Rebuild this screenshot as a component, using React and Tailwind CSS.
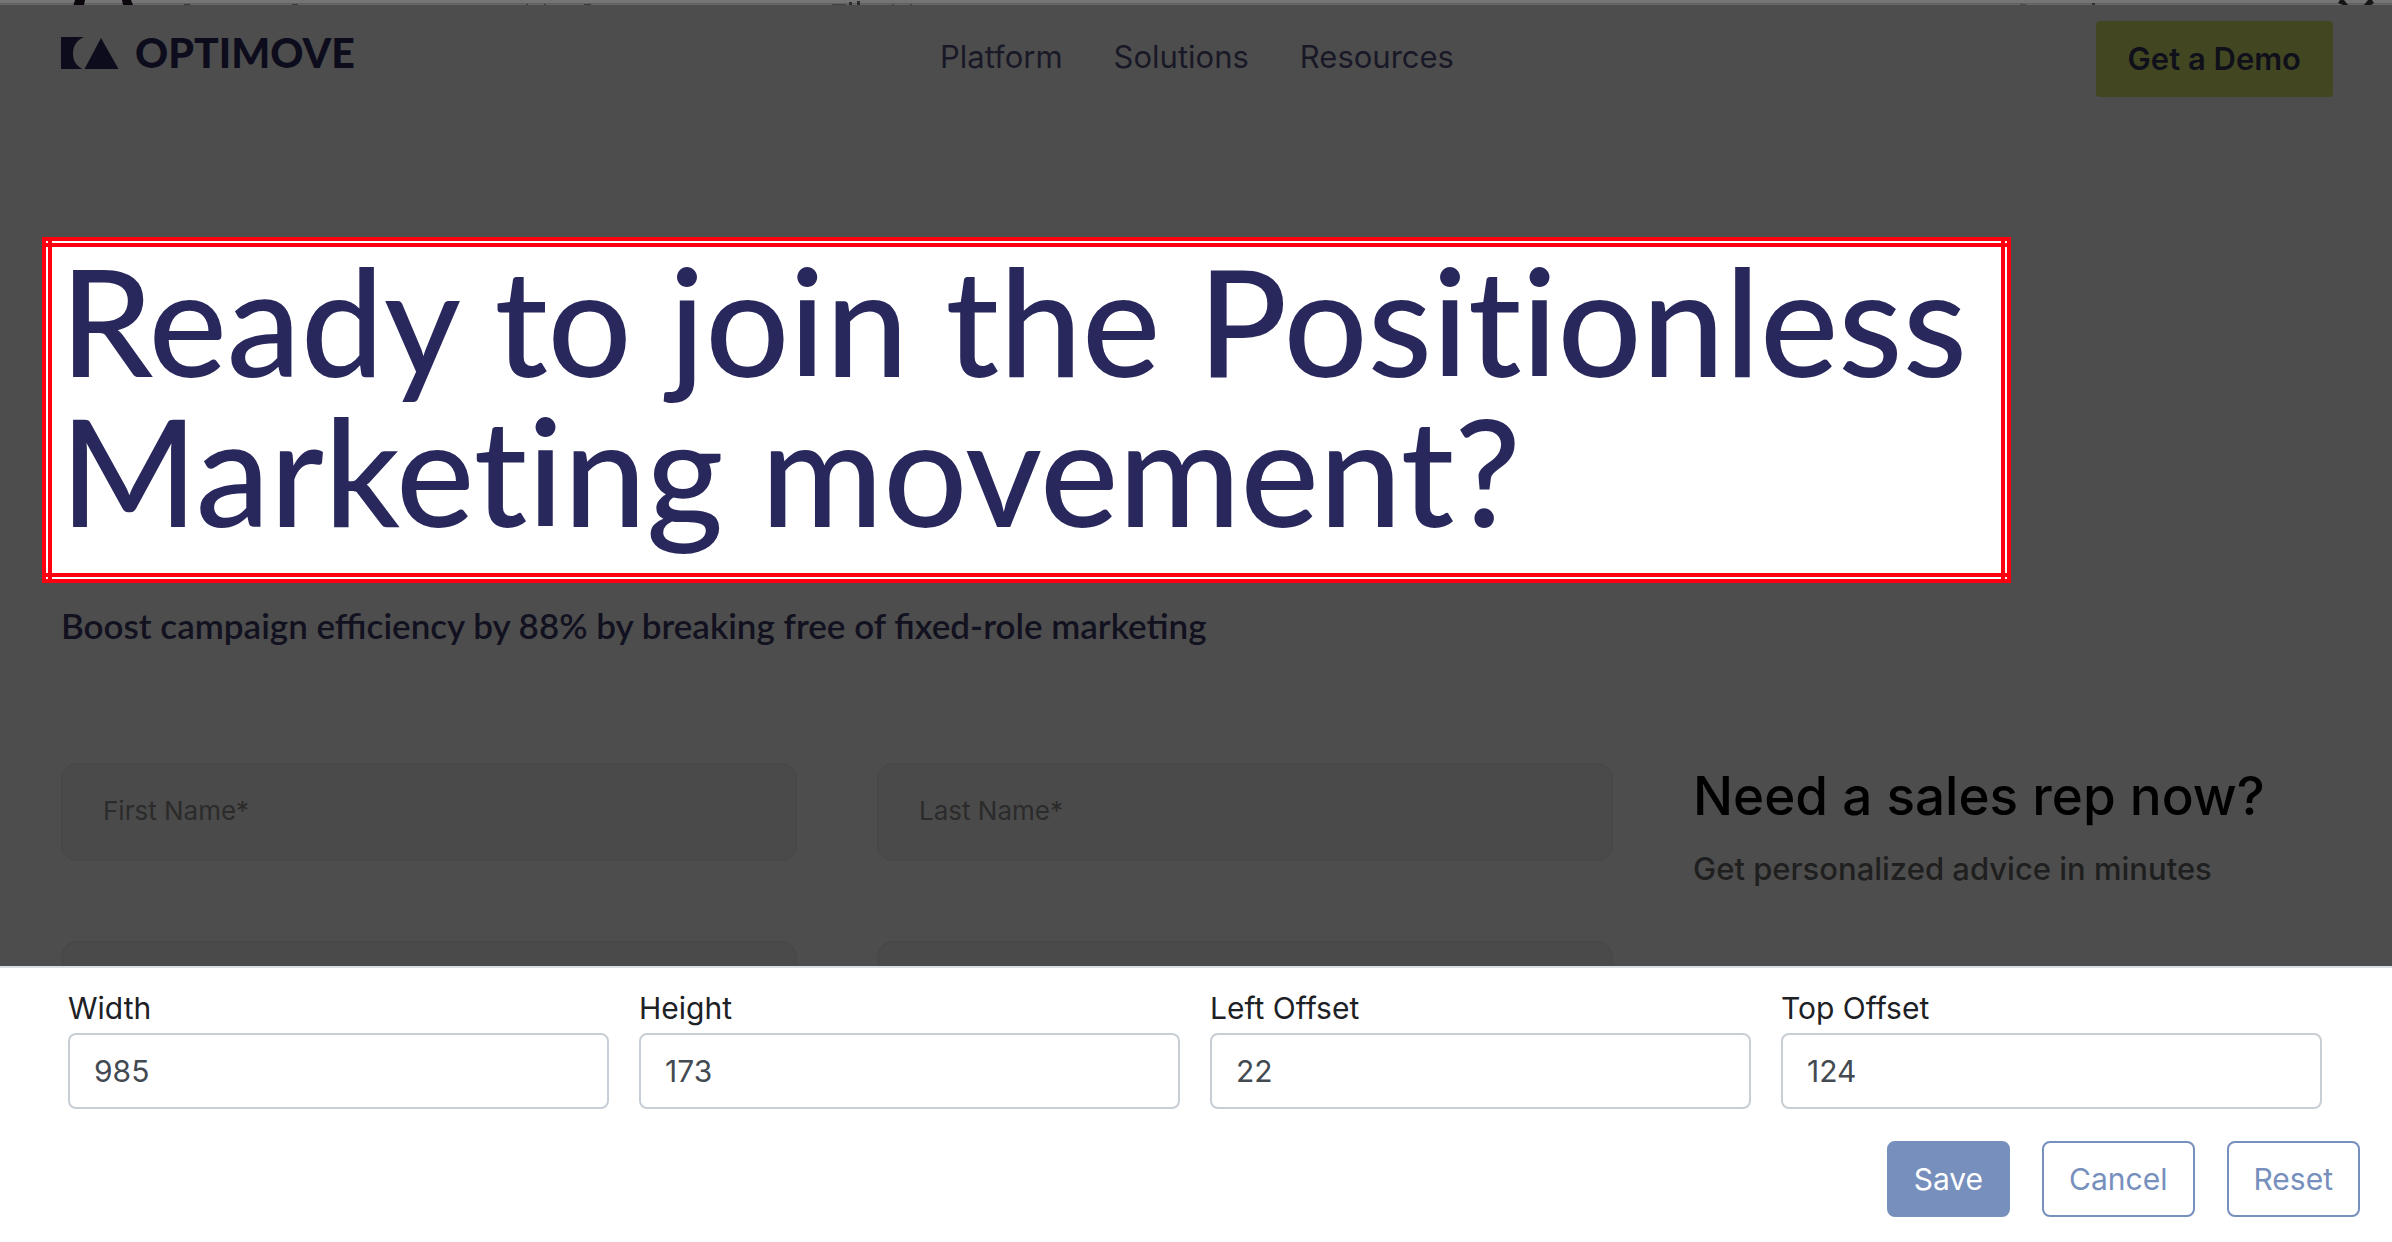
import React from "react";

const navItems = ["Platform", "Solutions", "Resources"];

const cropFields = [
  { id: "crop-width", label: "Width", value: "985" },
  { id: "crop-height", label: "Height", value: "173" },
  { id: "crop-left", label: "Left Offset", value: "22" },
  { id: "crop-top", label: "Top Offset", value: "124" },
];

function ClippedHeader() {
  return (
    <div className="flex h-[5px] shrink-0 justify-between overflow-hidden bg-[linear-gradient(#757575_3px,#5f5f5f_3px,#5f5f5f_4px,#686868_4px)]">
      <svg className="h-[5px] w-[960px] shrink-0" viewBox="0 0 960 5" aria-hidden="true">
        <path d="M75 0h10l-1 5H73.500zM122 0h9l2 5h-10z" fill="#0b070c" />
        <path d="M184 4h6v1h-6zM292 4h6v1h-6zM526 4h2v1h-2zM544 4h2v1h-2zM584 4h7v1h-7z" fill="#3a3a3a" />
        <path d="M832 4h14v1h-14zM892 4h2v1h-2zM910 4h2v1h-2z" fill="#444" />
        <path d="M849 2h3v3h-3zM857 1h3v4h-3z" fill="#2d2d2d" />
      </svg>
      <svg className="h-[5px] w-[412px] shrink-0" viewBox="0 0 412 5" aria-hidden="true">
        <path d="M40 4h6v1h-6z" fill="#4a4a4a" />
        <path d="M112 3h3v2h-3z" fill="#303030" />
        <path d="M360 0h4l4 5h-5l-5-2zM388 0h4l2 3-3 2h-7z" fill="#151515" />
      </svg>
    </div>
  );
}

function Logo() {
  return (
    <a href="#" className="flex items-center gap-4 text-[#0d0c1c]">
      <svg className="h-8 w-[58px]" viewBox="0 0 58 32" fill="currentColor" aria-hidden="true">
        <path d="M0 0h23C16 3 12 9 12 16.500S15.500 29 21.500 32H0z" />
        <path d="M40 1 57.500 32h-34z" />
      </svg>
      <span className="font-['Lato',sans-serif] text-[41px] leading-8 font-black">OPTIMOVE</span>
    </a>
  );
}

function CropFrame({ children }) {
  return (
    <section className="relative mt-[140px] mr-[381px] ml-[42px] bg-white pt-2 pr-4 pb-[38px] pl-[18px]">
      {children}
      <div className="absolute inset-x-0 top-0 h-[10px] border-y-4 border-[#ff0011]" />
      <div className="absolute inset-x-0 bottom-0 h-[10px] border-y-4 border-[#ff0011]" />
      <div className="absolute inset-y-0 left-0 w-[10px] border-x-4 border-[#ff0011]" />
      <div className="absolute inset-y-0 right-0 w-[10px] border-x-4 border-[#ff0011]" />
    </section>
  );
}

function PageField({ label }) {
  return (
    <input
      type="text"
      aria-label={label || "Form field"}
      placeholder={label}
      className="h-[98px] w-full rounded-2xl border-2 border-[#484848] bg-[#4a4a4a] px-10 pb-1 text-[26px] text-[#2b2b2b] placeholder:text-[#2b2b2b] outline-none"
    />
  );
}

function PagePreview() {
  return (
    <main className="min-h-0 flex-1 overflow-hidden bg-[#4d4d4d]">
      <header className="grid grid-cols-[1fr_auto_1fr] items-start pt-4 pr-[59px] pl-[61px]">
        <div className="pt-4">
          <Logo />
        </div>
        <nav className="flex gap-[51px] pt-[18px] text-[31px] leading-9 text-[#191827]">
          {navItems.map((item) => (
            <a key={item} href="#">
              {item}
            </a>
          ))}
        </nav>
        <button
          type="button"
          className="h-[76px] justify-self-end rounded-[4px] bg-[#424722] px-8 text-[31px] font-semibold text-[#10101b]"
        >
          Get a Demo
        </button>
      </header>

      <CropFrame>
        <h1 className="font-['Lato',sans-serif] text-[148px] leading-[150px] font-medium text-[#29285c] [font-variant-ligatures:none]">
          Ready to join the Positionless
          <br />
          Marketing movement?
        </h1>
      </CropFrame>

      <div className="pr-[59px] pl-[61px]">
        <p className="mt-[22px] font-['Lato',sans-serif] text-[35px] leading-10 font-semibold text-[#12111f]">
          Boost campaign efficiency by 88% by breaking free of fixed-role marketing
        </p>
        <div className="mt-[118px] grid grid-cols-[23fr_23fr_20fr] gap-x-20">
          <div className="flex flex-col gap-20">
            <PageField label="First Name*" />
            <PageField />
          </div>
          <div className="flex flex-col gap-20">
            <PageField label="Last Name*" />
            <PageField />
          </div>
          <aside>
            <h2 className="text-[53px] leading-[66px] font-medium text-black">Need a sales rep now?</h2>
            <p className="mt-[22px] text-[31px] leading-9 font-medium text-[#1f1f1f]">
              Get personalized advice in minutes
            </p>
          </aside>
        </div>
      </div>
    </main>
  );
}

function CropControls() {
  return (
    <form className="shrink-0 border-t-2 border-[#d9dee2] bg-white pb-[25px] text-[30px]">
      <div className="grid grid-cols-4 gap-x-[30px] pt-[19px] pr-[70px] pl-[68px]">
        {cropFields.map((field) => (
          <div key={field.id}>
            <label htmlFor={field.id} className="mb-1 block leading-[42px] text-[#1d2125]">
              {field.label}
            </label>
            <input
              id={field.id}
              type="text"
              defaultValue={field.value}
              className="block h-[76px] w-full rounded-lg border-2 border-[#c8ced5] bg-white px-6 text-[#434a51] outline-none"
            />
          </div>
        ))}
      </div>
      <div className="mt-8 flex justify-end gap-8 pr-8">
        <button type="button" className="h-[76px] rounded-lg border-2 border-[#768fbc] bg-[#768fbc] px-[25px] text-white">
          Save
        </button>
        <button type="button" className="h-[76px] rounded-lg border-2 border-[#768fbc] px-[25px] text-[#768fbc]">
          Cancel
        </button>
        <button type="button" className="h-[76px] rounded-lg border-2 border-[#768fbc] px-[25px] text-[#768fbc]">
          Reset
        </button>
      </div>
    </form>
  );
}

export default function App() {
  return (
    <div className="flex h-screen flex-col bg-white font-['Inter',sans-serif]">
      <ClippedHeader />
      <PagePreview />
      <CropControls />
    </div>
  );
}
